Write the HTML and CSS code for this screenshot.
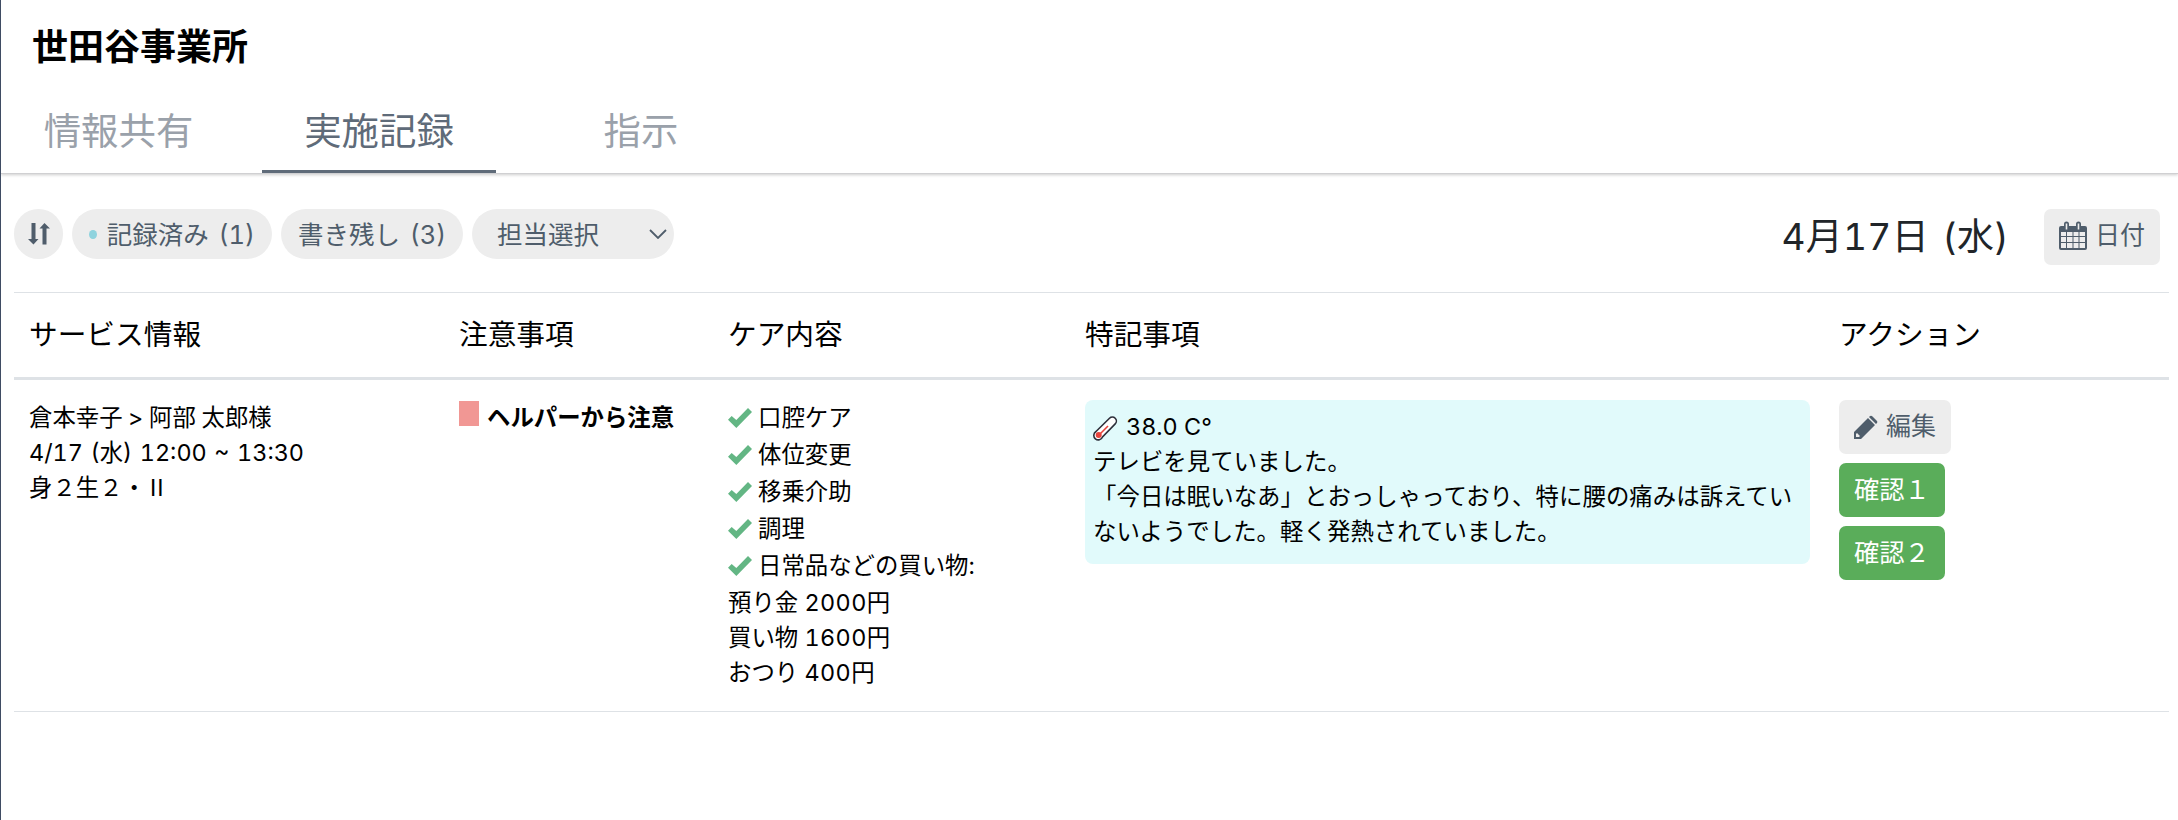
FILE: index.html
```
<!DOCTYPE html>
<html lang="ja">
<head>
    <meta charset="UTF-8">
    <meta name="viewport" content="width=device-width, initial-scale=1.0">
    <title>世田谷事業所</title>
    <link rel="stylesheet" href="styles.css">
</head>
<body>
    <svg class="symbols">
        <symbol id="check" viewBox="0 0 72 60">
            <path d="M0 35 L11 24 L25 36 L60 0 L72 12 L25 60 Z"/>
        </symbol>
    </svg>
    <header class="header">
        <h1>世田谷事業所</h1>
        <nav class="tabs">
            <a class="tab">情報共有</a>
            <a class="tab active">実施記録</a>
            <a class="tab">指示</a>
        </nav>
    </header>
    <main class="content">
        <div class="toolbar">
            <div class="filters">
                <button class="pill sort">
                    <svg width="22" height="24" viewBox="0 0 22 24">
                        <path d="M3.500 1h4v16h3l-5 5.500L0 17h3.500zM14.500 22.500v-16h-3l5-5.500L22 6.500h-3.500v16z"/>
                    </svg>
                </button>
                <button class="pill done"><span class="dot"></span>記録済み (1)</button>
                <button class="pill left">書き残し (3)</button>
                <button class="pill select">担当選択
                    <svg width="18" height="10" viewBox="0 0 18 10"><path d="M1 1l8 8 8-8"/></svg>
                </button>
            </div>
            <div class="date">
                <span class="today">4月17日 (水)</span>
                <button class="btn btn-date">
                    <svg width="28" height="30" viewBox="0 0 28 30">
                        <path fill-rule="evenodd" d="M2 5h3V3a2.500 2.500 0 0 1 5 0v2h7V3a2.500 2.500 0 0 1 5 0v2h4a2 2 0 0 1 2 2v20a2 2 0 0 1-2 2H2a2 2 0 0 1-2-2V7a2 2 0 0 1 2-2zM6.700 2.500v6h1.600v-6zM18.700 2.500v6h1.600v-6zM2 11v4h5v-4zM8 11v4h5.500v-4zM14.500 11v4h5v-4zM20.500 11v4H26v-4zM2 16v5h5v-5zM8 16v5h5.500v-5zM14.500 16v5h5v-5zM20.500 16v5H26v-5zM2 22v5h5v-5zM8 22v5h5.500v-5zM14.500 22v5h5v-5zM20.500 22v5H26v-5z"/>
                    </svg>日付
                </button>
            </div>
        </div>
        <table class="records">
            <colgroup>
                <col class="col-service">
                <col class="col-note">
                <col class="col-care">
                <col class="col-special">
                <col class="col-action">
            </colgroup>
            <thead>
                <tr>
                    <th>サービス情報</th>
                    <th>注意事項</th>
                    <th>ケア内容</th>
                    <th>特記事項</th>
                    <th>アクション</th>
                </tr>
            </thead>
            <tbody>
                <tr>
                    <td>
                        <div class="names">倉本幸子 &gt; 阿部 太郎様</div>
                        <div class="time">4/17 (水) 12:00 ~ 13:30</div>
                        <div>身２生２・<span class="rank">II</span></div>
                    </td>
                    <td>
                        <div class="caution"><span class="flag"></span>ヘルパーから注意</div>
                    </td>
                    <td>
                        <div class="care"><svg><use href="#check"/></svg>口腔ケア</div>
                        <div class="care"><svg><use href="#check"/></svg>体位変更</div>
                        <div class="care"><svg><use href="#check"/></svg>移乗介助</div>
                        <div class="care"><svg><use href="#check"/></svg>調理</div>
                        <div class="care"><svg><use href="#check"/></svg>日常品などの買い物:</div>
                        <div>預り金 <span class="num">2000</span>円</div>
                        <div>買い物 <span class="num">1600</span>円</div>
                        <div>おつり <span class="num">400</span>円</div>
                    </td>
                    <td>
                        <div class="memo">
                            <div class="temp">
                                <svg width="25" height="25" viewBox="0 0 25 25">
                                    <path class="tube" d="M3 15.500L16.500 2.200a4 4 0 0 1 5.700 5.700L9.500 21A4.500 4.500 0 1 1 3 15.500z"/>
                                    <circle class="mercury" cx="5.700" cy="19" r="3"/>
                                    <path class="line" d="M6 19l9-9"/>
                                </svg>
                                38.0 C°
                            </div>
                            <p>テレビを見ていました。</p>
                            <p>「今日は眠いなあ」とおっしゃっており、特に腰の痛みは訴えていないようでした。軽く発熱されていました。</p>
                        </div>
                    </td>
                    <td>
                        <div class="actions">
                            <button class="btn">
                                <svg width="24" height="24" viewBox="0 0 24 24">
                                    <path fill-rule="evenodd" d="M0 24v-7L14 3l7 7L7 24zM2 19v3h3l1-1-3-3zM15.500 1.500a2 2 0 0 1 3 0l4 4a2 2 0 0 1 0 3L22 9l-7-7z"/>
                                </svg>編集
                            </button>
                            <button class="btn btn-green">確認１</button>
                            <button class="btn btn-green">確認２</button>
                        </div>
                    </td>
                </tr>
            </tbody>
        </table>
    </main>
</body>
</html>
```
FILE: styles.css
```
* {
    box-sizing: border-box;
}

body {
    margin: 0;
    min-height: 100vh;
    border-left: 1px solid #3f4c63;
    font-family: Inter, "Noto Sans CJK JP", sans-serif;
    font-size: 23.4px;
    font-weight: 399;
    font-variant-numeric: tabular-nums;
    line-height: 35px;
    color: #000;
    background: #fff;
}

button {
    border: none;
    font: inherit;
    color: #4f5d6b;
    background: #ededed;
}

.symbols {
    display: none;
}

/* Header */
.header {
    height: 174px;
    border-bottom: 1px solid #d0d0d2;
    box-shadow: 0 1px 3px rgba(0, 0, 0, 0.2);
}

h1 {
    margin: 0;
    padding: 21px 0 0 31px;
    height: 93px;
    font-size: 36px;
    line-height: 52px;
}

.tabs {
    display: flex;
    height: 80px;
    gap: 28px;
}

.tab {
    width: 234px;
    padding-top: 12px;
    text-align: center;
    font-size: 37.4px;
    line-height: 54px;
    color: #9aa1aa;
}

.tab:first-child {
    width: 233px;
    padding-left: 2px;
}

.tab.active {
    color: #5f6b79;
    border-bottom: 3px solid #5f6b79;
}

/* Filters and date */
.content {
    padding: 0 9px 0 13px;
}

.toolbar {
    display: flex;
    justify-content: space-between;
    padding: 35px 9px 0 0;
    height: 118px;
}

.filters {
    display: flex;
    gap: 9px;
}

.pill {
    display: flex;
    align-items: center;
    height: 50px;
    padding: 0 17px;
    border-radius: 25px;
    font-size: 25.5px;
    word-spacing: 3px;
    white-space: nowrap;
}

.sort {
    width: 49px;
    padding: 0 14px;
}

.pill svg {
    flex: none;
    fill: #4f5d6b;
}

.done {
    width: 200px;
}

.left {
    width: 182px;
}

.dot {
    width: 9px;
    height: 9px;
    margin-right: 10px;
    border-radius: 50%;
    background: #8fd3de;
}

.select {
    width: 202px;
    justify-content: space-between;
    padding: 0 7px 0 25px;
}

.select svg {
    fill: none;
    stroke: #4f5d6b;
    stroke-width: 1.8;
}

.date {
    display: flex;
    align-items: flex-start;
}

.today {
    margin-right: 35px;
    font-size: 37px;
    letter-spacing: 0.3px;
    word-spacing: 3px;
    line-height: 56px;
    color: #212529;
}

.btn {
    display: flex;
    align-items: center;
    height: 54px;
    padding: 0 15px 1px;
    border-radius: 7px;
    font-size: 25px;
}

.btn svg {
    margin-right: 8px;
    fill: #4f5d6b;
}

.btn-date {
    width: 116px;
    height: 56px;
    padding-bottom: 3px;
}

.btn-green {
    font-size: 25.3px;
    font-weight: 400;
    color: #fff;
    background: #5aad5a;
}

/* Records table */
.records {
    width: 100%;
    table-layout: fixed;
    border-collapse: separate;
    border-spacing: 0;
}

.col-service { width: 430px; }
.col-note { width: 269px; }
.col-care { width: 357px; }
.col-special { width: 754px; }

th {
    height: 88px;
    padding: 0 15px 2px;
    border-top: 1px solid #dee2e6;
    border-bottom: 3px solid #dee2e6;
    text-align: left;
    font-size: 28.7px;
    font-weight: 399;
}

td {
    padding: 20px 14px 21px 15px;
    border-bottom: 1px solid #dee2e6;
    vertical-align: top;
}

.names {
    word-spacing: -0.6px;
}

.time {
    word-spacing: 1.3px;
}

.num {
    letter-spacing: 0.4px;
}

.rank {
    margin-left: 4px;
    letter-spacing: 1px;
}

.caution {
    display: flex;
    font-weight: 700;
    white-space: nowrap;
}

.flag {
    width: 20px;
    height: 25px;
    margin: 1px 8px 0 0;
    background: #f19794;
}

.care {
    display: flex;
    align-items: center;
    height: 37px;
    padding-bottom: 2px;
}

.care svg {
    width: 24px;
    height: 20px;
    margin-right: 6px;
    fill: #63b684;
}

.memo {
    height: 164px;
    padding: 9px 8px;
    border-radius: 8px;
    background: #e1fafb;
}

.memo p {
    margin: 0;
    letter-spacing: 0.05px;
}

.temp {
    display: flex;
    align-items: center;
    gap: 8px;
}

.temp svg {
    margin-top: 3px;
}

.tube {
    fill: #fff;
    stroke: #2d2f3a;
    stroke-width: 1.6;
}

.mercury {
    fill: #e8443d;
}

.line {
    stroke: #e8443d;
    stroke-width: 1.6;
}

.actions {
    display: flex;
    flex-direction: column;
    align-items: flex-start;
    gap: 9px;
}
```
